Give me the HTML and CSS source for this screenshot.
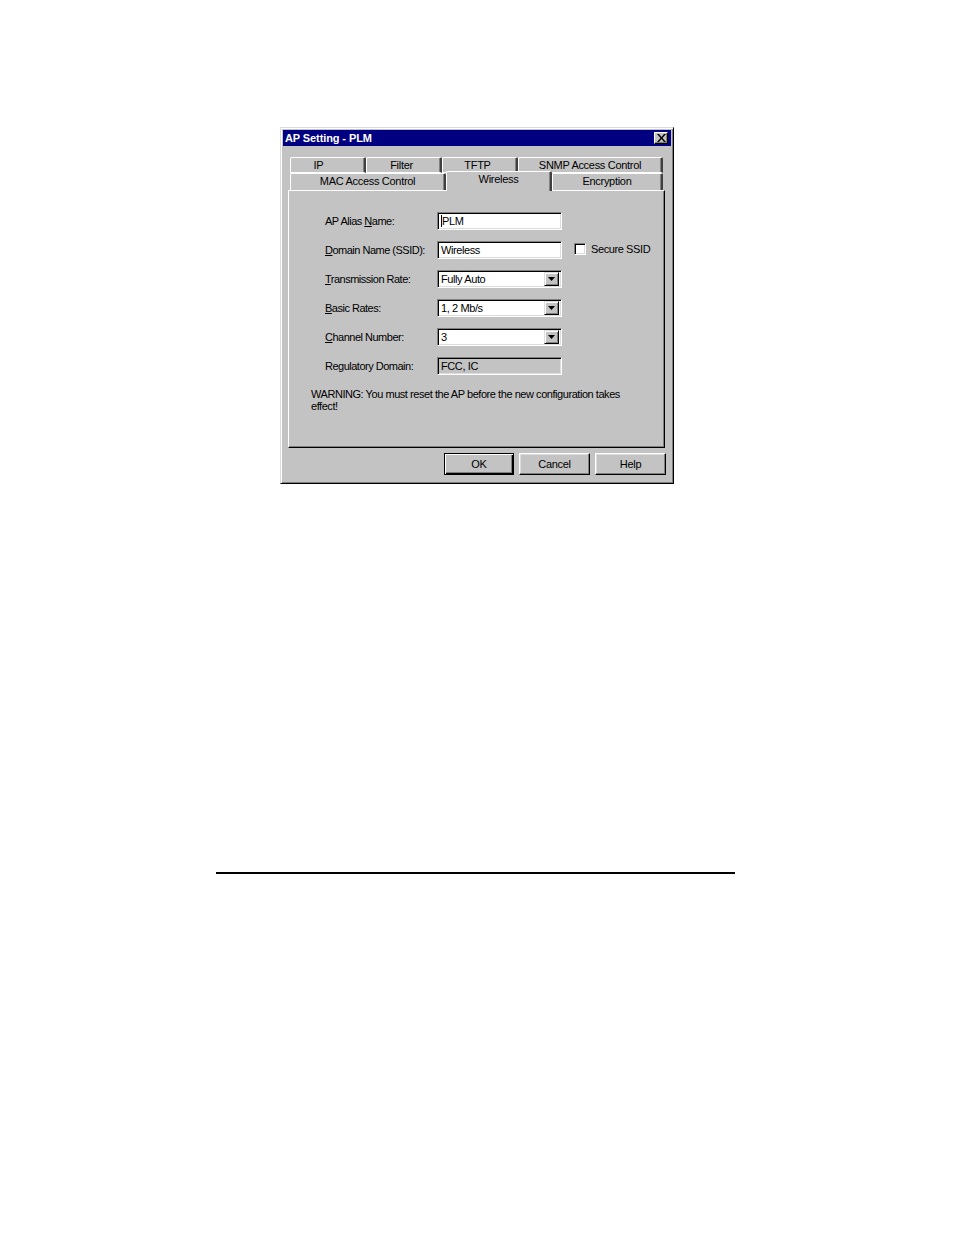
FILE: index.html
```html
<!DOCTYPE html>
<html>
<head>
<meta charset="utf-8">
<link rel="stylesheet" href="styles.css">
</head>
<body>
<div class="page">
  <div class="dialog">
    <div class="titlebar">
      <span class="title">AP Setting - PLM</span>
      <span class="closebtn"><svg width="9" height="8" viewBox="0 0 9 8"><path d="M0 0h2l2.5 3 2.5-3h2l-3.5 4 3.5 4h-2l-2.5-3-2.5 3h-2l3.5-4z" fill="#000"/></svg></span>
    </div>
    <div class="tabs">
      <div class="tabrow row1">
        <div class="tab w76 first">IP</div>
        <div class="tab w76 shift">Filter</div>
        <div class="tab w76 shift">TFTP</div>
        <div class="tab w145">SNMP Access Control</div>
      </div>
      <div class="tabrow row2">
        <div class="tab w156">MAC Access Control</div>
        <div class="tab w106 active">Wireless</div>
        <div class="tab w111">Encryption</div>
      </div>
    </div>
    <div class="panel">
      <div class="form">
        <div class="label">AP Alias <u>N</u>ame:</div>
        <div class="field"><span class="caret"></span>PLM</div>
        <div class="extra"></div>

        <div class="label"><u>D</u>omain Name (SSID):</div>
        <div class="field">Wireless</div>
        <div class="extra"><span class="check"></span><span>Secure SSID</span></div>

        <div class="label"><u>T</u>ransmission Rate:</div>
        <div class="field combo"><span class="val">Fully Auto</span><span class="arrow"><svg width="7" height="4" viewBox="0 0 7 4"><path d="M0 0h7l-3.5 4z" fill="#000"/></svg></span></div>
        <div class="extra"></div>

        <div class="label"><u>B</u>asic Rates:</div>
        <div class="field combo"><span class="val">1, 2 Mb/s</span><span class="arrow"><svg width="7" height="4" viewBox="0 0 7 4"><path d="M0 0h7l-3.5 4z" fill="#000"/></svg></span></div>
        <div class="extra"></div>

        <div class="label"><u>C</u>hannel Number:</div>
        <div class="field combo"><span class="val">3</span><span class="arrow"><svg width="7" height="4" viewBox="0 0 7 4"><path d="M0 0h7l-3.5 4z" fill="#000"/></svg></span></div>
        <div class="extra"></div>

        <div class="label">Regulatory Domain:</div>
        <div class="field disabled">FCC, IC</div>
        <div class="extra"></div>
      </div>
      <p class="warning">WARNING: You must reset the AP before the new configuration takes effect!</p>
    </div>
    <div class="buttons">
      <div class="btn default"><span>OK</span></div>
      <div class="btn"><span>Cancel</span></div>
      <div class="btn"><span>Help</span></div>
    </div>
  </div>
  <div class="rule"></div>
</div>
</body>
</html>
```
FILE: styles.css
```css
html, body {
  margin: 0;
  padding: 0;
  background: #fff;
}
.page {
  padding-top: 127px;
  font-family: "Liberation Sans", Arial, sans-serif;
  font-size: 11px;
  color: #000;
}
.dialog {
  margin-left: 280px;
  width: 394px;
  height: 357px;
  box-sizing: border-box;
  background: #c3c3c3;
  border: 1px solid;
  border-color: #dcdcdc #000 #000 #dcdcdc;
  box-shadow: inset 1px 1px 0 #fff, inset -1px -1px 0 #808080;
  padding: 2px;
  display: flex;
  flex-direction: column;
}
.titlebar {
  height: 16px;
  background: #000080;
  color: #fff;
  display: flex;
  align-items: center;
  justify-content: space-between;
  padding: 0 3px 0 2px;
}
.title {
  font-weight: bold;
  font-size: 11px;
  letter-spacing: -0.1px;
}
.closebtn {
  width: 14px;
  height: 12px;
  box-sizing: border-box;
  background: #c3c3c3;
  border: 1px solid;
  border-color: #fff #000 #000 #fff;
  box-shadow: inset -1px -1px 0 #808080;
  display: flex;
  align-items: center;
  justify-content: center;
}
.tabs {
  margin-top: 11px;
  padding-left: 7px;
  display: flex;
  flex-direction: column;
}
.tabrow {
  display: flex;
  height: 16px;
}
.row2 {
  height: 17px;
}
.tab {
  box-sizing: border-box;
  border-top: 1px solid #fff;
  border-left: 1px solid #fff;
  border-right: 2px solid;
  border-right-color: #404040;
  box-shadow: inset -1px 0 0 #808080;
  border-radius: 2px 2px 0 0;
  text-align: center;
  line-height: 15px;
  letter-spacing: -0.3px;
  background: #c3c3c3;
}
.row1 .tab {
  border-bottom: 1px solid #fff;
}
.tab.first {
  padding-right: 18px;
}
.tab.shift {
  padding-right: 4px;
}
.tab.active {
  margin-top: -2px;
  height: 20px;
  position: relative;
  z-index: 2;
  line-height: 14px;
}
.w76 { width: 76px; }
.w145 { width: 145px; }
.w156 { width: 156px; }
.w106 { width: 106px; }
.w111 { width: 111px; }
.panel {
  margin-left: 5px;
  width: 377px;
  height: 258px;
  box-sizing: border-box;
  border: 1px solid;
  border-color: #fff #000 #000 #fff;
  box-shadow: inset -1px -1px 0 #808080;
  padding: 21px 0 0 36px;
  position: relative;
  z-index: 1;
}
.form {
  display: grid;
  grid-template-columns: 112px 125px auto;
  grid-auto-rows: 18px;
  row-gap: 11px;
  align-items: center;
}
.label {
  letter-spacing: -0.5px;
  white-space: nowrap;
}
.field {
  height: 18px;
  box-sizing: border-box;
  background: #fff;
  border: 1px solid;
  border-color: #808080 #fff #fff #808080;
  box-shadow: inset 1px 1px 0 #000, inset -1px -1px 0 #dcdcdc;
  padding: 0 0 0 3px;
  line-height: 16px;
  letter-spacing: -0.4px;
  display: flex;
  align-items: center;
}
.caret {
  width: 1px;
  height: 12px;
  background: #000;
}
.field.disabled {
  background: #c3c3c3;
}
.combo {
  justify-content: space-between;
  padding-right: 2px;
}
.arrow {
  width: 15px;
  height: 14px;
  box-sizing: border-box;
  background: #c3c3c3;
  border: 1px solid;
  border-color: #dcdcdc #000 #000 #dcdcdc;
  box-shadow: inset 1px 1px 0 #fff, inset -1px -1px 0 #808080;
  display: flex;
  align-items: center;
  justify-content: center;
}
.extra {
  display: flex;
  align-items: center;
  padding-left: 12px;
  gap: 5px;
  letter-spacing: -0.4px;
  white-space: nowrap;
  position: relative;
  top: -1px;
}
.check {
  width: 12px;
  height: 12px;
  box-sizing: border-box;
  background: #fff;
  border: 1px solid;
  border-color: #808080 #fff #fff #808080;
  box-shadow: inset 1px 1px 0 #000, inset -1px -1px 0 #dcdcdc;
}
.warning {
  margin: 13px 0 0 -14px;
  width: 330px;
  line-height: 12px;
  letter-spacing: -0.45px;
}
.buttons {
  display: flex;
  justify-content: flex-end;
  gap: 5px;
  margin-top: 5px;
  padding-right: 5px;
}
.btn {
  width: 71px;
  height: 22px;
  box-sizing: border-box;
  border: 1px solid;
  border-color: #fff #000 #000 #fff;
  box-shadow: inset -1px -1px 0 #808080, inset 1px 1px 0 #dcdcdc;
  display: flex;
  align-items: center;
  justify-content: center;
  letter-spacing: -0.3px;
}
.btn.default {
  width: 70px;
  border: 1px solid #000;
  box-shadow: inset 1px 1px 0 #fff, inset -1px -1px 0 #000, inset -2px -2px 0 #808080;
}
.rule {
  margin: 388px 0 0 216px;
  width: 519px;
  height: 2px;
  background: #000;
}
```
